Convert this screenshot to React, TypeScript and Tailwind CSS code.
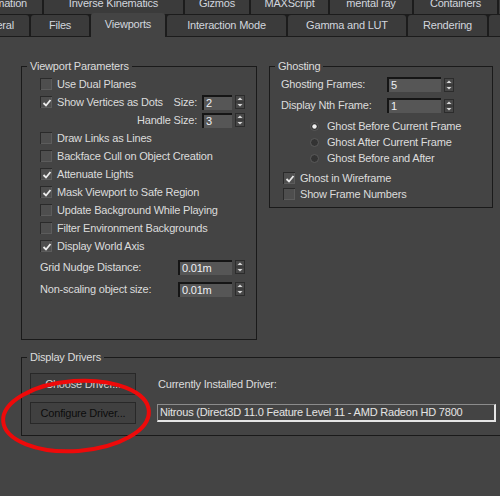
import React from "react";

function Check({ checked }: { checked?: boolean }) {
  return (
    <span className="w-[12px] h-[12px] shrink-0 bg-[#4e4e4e] border-t border-l border-[#2a2a2a] shadow-[inset_-1px_-1px_0_#5c5c5c] flex items-center justify-center">
      {checked && (
        <svg width="10" height="10" viewBox="0 0 10 10">
          <path d="M1.5 5 L4 7.5 L8.5 2" stroke="#ececec" strokeWidth="1.8" fill="none" />
        </svg>
      )}
    </span>
  );
}

function Radio({ on }: { on?: boolean }) {
  return (
    <svg width="9" height="9" viewBox="0 0 9 9" className="shrink-0">
      <circle cx="4.5" cy="4.5" r="4" fill="#333" stroke="#5a5a5a" strokeWidth="1" />
      {on && <circle cx="4.5" cy="4.5" r="2.2" fill="#f0f0f0" />}
    </svg>
  );
}

function Spin() {
  return (
    <svg width="10" height="14" viewBox="0 0 10 14" className="shrink-0">
      <rect x="0.5" y="0.5" width="9" height="13" fill="#474747" stroke="#2c2c2c" />
      <line x1="1" y1="7" x2="9" y2="7" stroke="#333" />
      <path d="M2.5 5 L5 2.5 L7.5 5 Z" fill="#d8d8d8" />
      <path d="M2.5 9 L5 11.5 L7.5 9 Z" fill="#d8d8d8" />
    </svg>
  );
}

function Field({ value, wide }: { value: string; wide?: boolean }) {
  return (
    <span
      className={
        (wide ? "w-[54px] " : "w-[30px] ") +
        "h-[15px] shrink-0 bg-[#565656] border-t-2 border-l-2 border-[#151515] text-[#eef0f4] pl-[2px] leading-[13px] whitespace-nowrap"
      }
    >
      {value}
    </span>
  );
}

function CbRow({ label, checked }: { label: string; checked?: boolean }) {
  return (
    <div className="h-[18px] flex items-center gap-[5px] whitespace-nowrap">
      <Check checked={checked} />
      <span>{label}</span>
    </div>
  );
}

export default function App() {
  return (
    <div className="w-[500px] h-[496px] overflow-hidden relative flex flex-col bg-[#444444] text-[#dcdcdc] text-[11px] tracking-[-0.2px] font-['Liberation_Sans',Arial,sans-serif]">
      {/* Tab row 1 */}
      <div className="flex gap-[2px] h-[15px] pb-[1px] bg-[#1c1c1c] overflow-hidden shrink-0 text-[#d2d6de]">
        <div className="w-[42px] shrink-0 bg-[#3b3b3b] overflow-hidden flex items-end justify-end pr-[15px] pb-[4px]">
          <span className="leading-[13px] whitespace-nowrap">Animation</span>
        </div>
        <div className="w-[139px] shrink-0 bg-[#3b3b3b] flex items-end justify-center pb-[4px]">
          <span className="leading-[13px] whitespace-nowrap">Inverse Kinematics</span>
        </div>
        <div className="w-[64px] shrink-0 bg-[#3b3b3b] flex items-end justify-center pb-[4px]">
          <span className="leading-[13px] whitespace-nowrap">Gizmos</span>
        </div>
        <div className="w-[77px] shrink-0 bg-[#3b3b3b] flex items-end justify-center pb-[4px]">
          <span className="leading-[13px] whitespace-nowrap">MAXScript</span>
        </div>
        <div className="w-[82px] shrink-0 bg-[#3b3b3b] flex items-end justify-center pb-[4px]">
          <span className="leading-[13px] whitespace-nowrap">mental ray</span>
        </div>
        <div className="w-[83px] shrink-0 bg-[#3b3b3b] flex items-end justify-center pb-[4px]">
          <span className="leading-[13px] whitespace-nowrap">Containers</span>
        </div>
        <div className="w-[40px] shrink-0 bg-[#3b3b3b]" />
      </div>
      {/* Tab row 2 */}
      <div className="flex gap-[2px] h-[22px] bg-[#1c1c1c] shrink-0 text-[#d2d6de]">
        <div className="w-[29px] h-[21px] shrink-0 bg-[#3b3b3b] rounded-tr-[3px] overflow-hidden flex items-center justify-end pr-[15px]">
          <span className="whitespace-nowrap">General</span>
        </div>
        <div className="w-[58px] h-[21px] shrink-0 bg-[#3b3b3b] rounded-t-[3px] flex items-center justify-center">
          <span className="whitespace-nowrap">Files</span>
        </div>
        <div className="w-[74px] h-[24px] mt-[-2px] relative z-10 shrink-0 bg-[#444444] rounded-t-[3px] flex items-center justify-center pb-[2px]">
          <span className="whitespace-nowrap">Viewports</span>
        </div>
        <div className="w-[119px] h-[21px] shrink-0 bg-[#3b3b3b] rounded-t-[3px] flex items-center justify-center">
          <span className="whitespace-nowrap">Interaction Mode</span>
        </div>
        <div className="w-[118px] h-[21px] shrink-0 bg-[#3b3b3b] rounded-t-[3px] flex items-center justify-center">
          <span className="whitespace-nowrap">Gamma and LUT</span>
        </div>
        <div className="w-[79px] h-[21px] shrink-0 bg-[#3b3b3b] rounded-t-[3px] flex items-center justify-center">
          <span className="whitespace-nowrap">Rendering</span>
        </div>
        <div className="w-[40px] h-[21px] shrink-0 bg-[#3b3b3b] rounded-t-[3px]" />
      </div>

      {/* Content */}
      <div className="flex-1 pl-[21px] pt-[22px] flex flex-col">
        <div className="flex items-start gap-[12px]">
          {/* Viewport Parameters */}
          <fieldset className="w-[236px] h-[281px] border border-[#1a1a1a] p-0 m-0 shrink-0">
            <legend className="ml-[5px] px-[3px] leading-[14px]">Viewport Parameters</legend>
            <div className="pl-[18px] pr-[11px] pt-[2px] flex flex-col">
              <CbRow label="Use Dual Planes" />
              <div className="h-[18px] flex items-center whitespace-nowrap">
                <Check checked />
                <span className="ml-[5px]">Show Vertices as Dots</span>
                <span className="flex-1" />
                <span className="mr-[5px]">Size:</span>
                <Field value="2" />
                <span className="w-[3px]" />
                <Spin />
              </div>
              <div className="h-[18px] flex items-center justify-end whitespace-nowrap">
                <span className="mr-[5px]">Handle Size:</span>
                <Field value="3" />
                <span className="w-[3px]" />
                <Spin />
              </div>
              <CbRow label="Draw Links as Lines" />
              <CbRow label="Backface Cull on Object Creation" />
              <CbRow label="Attenuate Lights" checked />
              <CbRow label="Mask Viewport to Safe Region" checked />
              <CbRow label="Update Background While Playing" />
              <CbRow label="Filter Environment Backgrounds" />
              <CbRow label="Display World Axis" checked />
              <div className="h-[24px] flex items-center whitespace-nowrap">
                <span>Grid Nudge Distance:</span>
                <span className="flex-1" />
                <Field value="0.01m" wide />
                <span className="w-[3px]" />
                <Spin />
              </div>
              <div className="h-[20px] flex items-center whitespace-nowrap">
                <span>Non-scaling object size:</span>
                <span className="flex-1" />
                <Field value="0.01m" wide />
                <span className="w-[3px]" />
                <Spin />
              </div>
            </div>
          </fieldset>

          {/* Ghosting */}
          <fieldset className="w-[224px] h-[149px] border border-[#1a1a1a] p-0 m-0 shrink-0">
            <legend className="ml-[5px] px-[3px] leading-[14px]">Ghosting</legend>
            <div className="pl-[11px] pt-[1px] flex flex-col">
              <div className="h-[21px] flex items-center whitespace-nowrap">
                <span className="w-[106px]">Ghosting Frames:</span>
                <Field value="5" wide />
                <span className="w-[3px]" />
                <Spin />
              </div>
              <div className="h-[21px] flex items-center whitespace-nowrap">
                <span className="w-[106px]">Display Nth Frame:</span>
                <Field value="1" wide />
                <span className="w-[3px]" />
                <Spin />
              </div>
              <div className="mt-[2px] pl-[29px] flex flex-col">
                <div className="h-[16px] flex items-center gap-[8px] whitespace-nowrap">
                  <Radio on />
                  <span>Ghost Before Current Frame</span>
                </div>
                <div className="h-[16px] flex items-center gap-[8px] whitespace-nowrap">
                  <Radio />
                  <span>Ghost After Current Frame</span>
                </div>
                <div className="h-[16px] flex items-center gap-[8px] whitespace-nowrap">
                  <Radio />
                  <span>Ghost Before and After</span>
                </div>
              </div>
              <div className="mt-[4px] pl-[2px] flex flex-col">
                <div className="h-[16px] flex items-center gap-[5px] whitespace-nowrap">
                  <Check checked />
                  <span>Ghost in Wireframe</span>
                </div>
                <div className="h-[16px] flex items-center gap-[5px] whitespace-nowrap">
                  <Check />
                  <span>Show Frame Numbers</span>
                </div>
              </div>
            </div>
          </fieldset>
        </div>

        {/* Display Drivers */}
        <fieldset className="mt-[10px] w-[495px] h-[86px] border border-[#1a1a1a] p-0 m-0 shrink-0">
          <legend className="ml-[5px] px-[3px] leading-[14px]">Display Drivers</legend>
          <div className="pl-[8px] pt-[9px] flex gap-[22px]">
            <div className="flex flex-col gap-[7px]">
              <div className="w-[106px] h-[22px] bg-[#3e3e3e] border border-[#282828] flex items-center justify-center text-[#d4d4d4] whitespace-nowrap">
                Choose Driver...
              </div>
              <div className="w-[106px] h-[22px] bg-[#404040] border border-[#282828] flex items-center justify-center text-[#0c0c0c] whitespace-nowrap">
                Configure Driver...
              </div>
            </div>
            <div className="flex flex-col gap-[7px] ml-[-1px]">
              <div className="h-[22px] flex items-center pl-[1px] whitespace-nowrap">Currently Installed Driver:</div>
              <div className="h-[22px] flex items-center">
                <div className="w-[339px] h-[18px] border-t border-l border-[#8c8c8c] border-r-2 border-b-2 border-r-[#e6e6e6] border-b-[#e6e6e6] bg-[#444444] flex items-center pl-[2px] text-[#e4e4e4] whitespace-nowrap overflow-hidden">
                  Nitrous (Direct3D 11.0 Feature Level 11 - AMD Radeon HD 7800
                </div>
              </div>
            </div>
          </div>
        </fieldset>
      </div>

      {/* Red annotation ellipse */}
      <svg className="absolute left-0 top-[370px] pointer-events-none" width="170" height="95" viewBox="0 370 170 95">
        <ellipse cx="76" cy="416" rx="73" ry="35" fill="none" stroke="#ee0a0a" strokeWidth="4" transform="rotate(-4 76 416)" />
      </svg>
    </div>
  );
}
